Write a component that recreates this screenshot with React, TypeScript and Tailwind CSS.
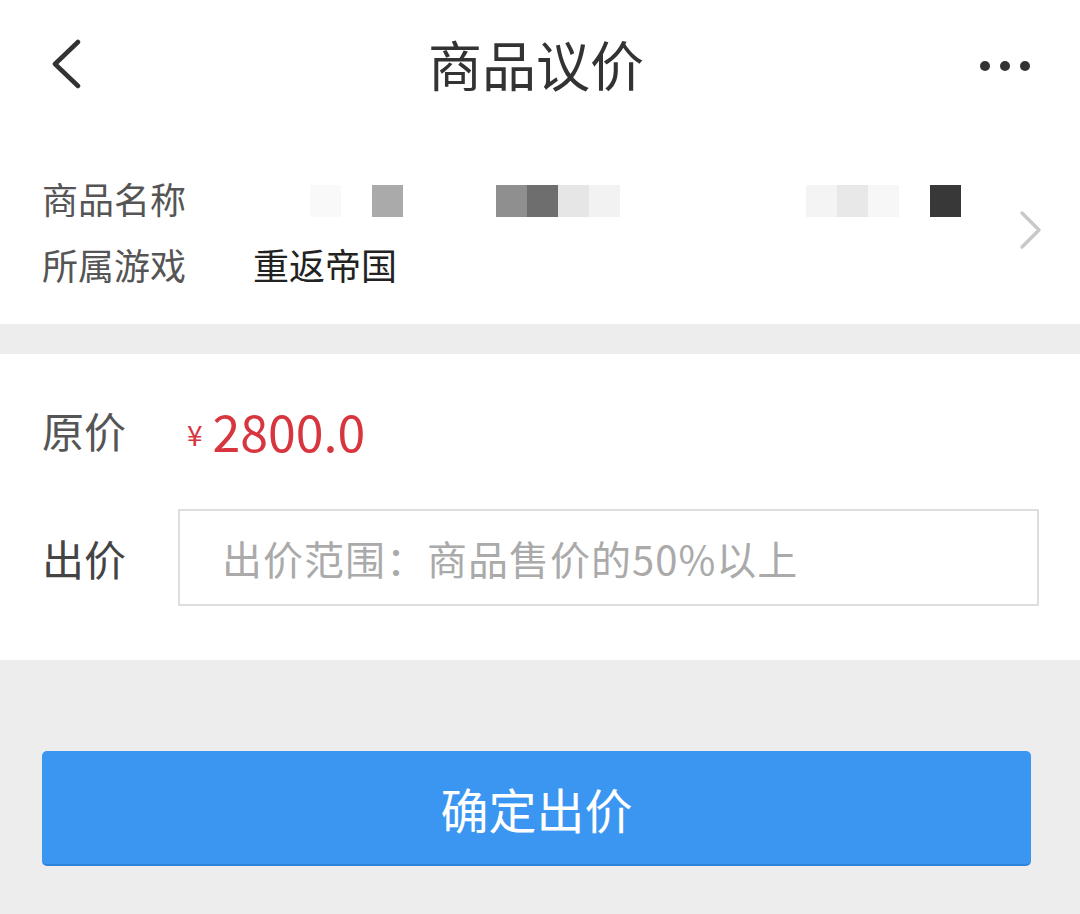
const font = { fontFamily: '"Noto Sans CJK SC", "Noto Sans", sans-serif' };

// 打码的商品名称像素块
const mosaic = [
  { left: 310, color: "#f9f9f9" },
  { left: 372, color: "#aaaaaa" },
  { left: 496, color: "#8f8f8f" },
  { left: 527, color: "#6e6e6e" },
  { left: 558, color: "#e6e6e6" },
  { left: 589, color: "#f2f2f2" },
  { left: 806, color: "#f4f4f4" },
  { left: 837, color: "#e8e8e8" },
  { left: 868, color: "#f7f7f7" },
  { left: 930, color: "#383838" },
];

export default function App() {
  return (
    <div className="flex h-[914px] w-[1080px] flex-col bg-[#ededed]" style={font}>
      {/* ヘッダー */}
      <div className="flex h-[130px] items-center justify-between bg-white pl-[50px] pr-[50px]">
        <svg width="32" height="50" viewBox="0 0 32 50" className="-mt-[2px]">
          <path d="M28 3 L5 25 L28 47" fill="none" stroke="#333" strokeWidth="4.5" strokeLinecap="round" strokeLinejoin="round" />
        </svg>
        <h1 className="ml-[10px] text-[54px] leading-none font-normal text-[#333] -mt-[2px]">商品议价</h1>
        <div className="flex gap-[10px] pt-[2px]">
          <span className="h-[10px] w-[10px] rounded-full bg-[#333]" />
          <span className="h-[10px] w-[10px] rounded-full bg-[#333]" />
          <span className="h-[10px] w-[10px] rounded-full bg-[#333]" />
        </div>
      </div>

      {/* 商品信息 */}
      <div className="relative flex h-[194px] items-center bg-white pl-[42px] pr-[36px]">
        <div className="flex flex-1 flex-col gap-[28px] pt-[8px]">
          <div className="flex h-[38px] items-center text-[36px] leading-none text-[#555]">
            <span>商品名称</span>
          </div>
          <div className="flex h-[38px] items-center text-[36px] leading-none">
            <span className="w-[211px] text-[#555]">所属游戏</span>
            <span className="text-[#222]">重返帝国</span>
          </div>
        </div>
        {mosaic.map((m) => (
          <span
            key={m.left}
            className="absolute top-[55px] h-[32px] w-[31px]"
            style={{ left: m.left, backgroundColor: m.color }}
          />
        ))}
        <svg width="26" height="40" viewBox="0 0 26 40" className="mt-[6px]">
          <path d="M4 3 L21 20 L4 37" fill="none" stroke="#c8c8c8" strokeWidth="3.5" strokeLinecap="round" strokeLinejoin="round" />
        </svg>
      </div>

      <div className="h-[30px]" />

      {/* 出价 */}
      <div className="flex h-[306px] flex-col bg-white pl-[42px] pr-[42px]">
        <div className="flex h-[155px] items-center pb-[4px]">
          <span className="w-[145px] text-[42px] leading-none text-[#555]">原价</span>
          <span className="mt-[8px] mr-[10px] text-[28px] leading-none text-[#d8363f]">¥</span>
          <span className="text-[50px] leading-none text-[#d8363f]">2800.0</span>
        </div>
        <div className="flex items-center">
          <span className="w-[136px] text-[42px] leading-none text-[#444]">出价</span>
          <div className="mr-[-1px] flex h-[97px] flex-1 items-center border-2 border-[#dedede] pl-[42px]">
            <span className="text-[40px] leading-none tracking-[1px] text-[#aaaaaa]">出价范围：商品售价的50%以上</span>
          </div>
        </div>
      </div>

      {/* ボタン */}
      <div className="px-[42px] pt-[91px]">
        <button className="flex h-[115px] w-[989px] items-center justify-center rounded-[5px] border-b-2 border-[#2f83d8] bg-[#3b96f1] text-[48px] leading-none text-white">
          确定出价
        </button>
      </div>
    </div>
  );
}
